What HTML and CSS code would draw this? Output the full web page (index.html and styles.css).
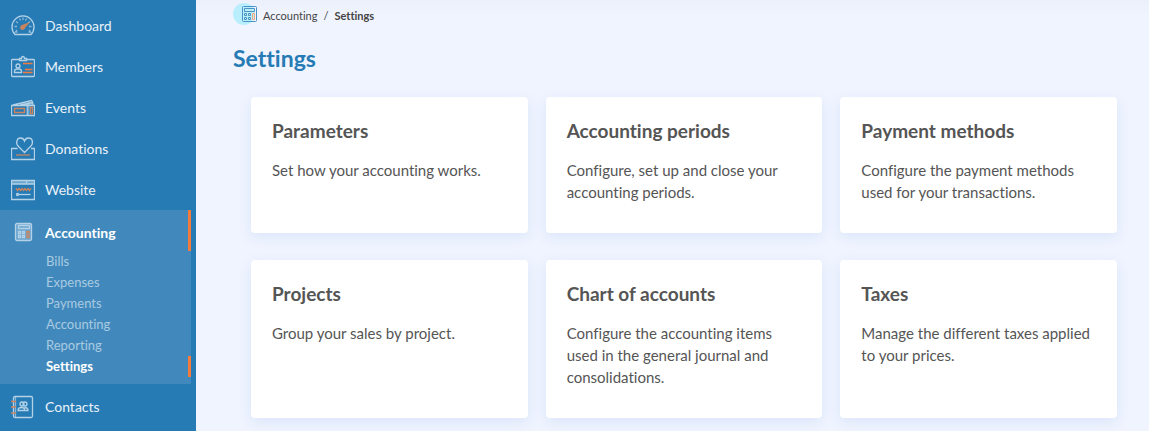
FILE: index.html
```html
<!DOCTYPE html>
<html lang="en">
<head>
    <meta charset="UTF-8">
    <meta name="viewport" content="width=device-width, initial-scale=1.0">
    <title>Accounting - Settings</title>
    <link rel="stylesheet" href="styles.css">
</head>
<body>
    <nav class="sidebar">
        <ul class="menu">
            <li>
                <a class="menu-link" href="#">
                    <svg class="icon" viewBox="0 0 24 24">
                        <path d="M4 20.500A11 11 0 1 1 20 20.500Z"/>
                        <path class="thin" d="M6.500 18H4.500L6 16M3.500 12.500H6M5 7.500L7 9M8.500 4.500L9.500 6.500M12 3.500V6M15.500 4.500L14.500 6.500M19 7.500L17 9M20.500 12.500H18M17.500 18H19.500L18 16"/>
                        <path class="accent-fill" d="M19 8L14 14A2.500 2.500 0 1 1 11 11Z"/>
                    </svg>
                    Dashboard
                </a>
            </li>
            <li>
                <a class="menu-link" href="#">
                    <svg class="icon" viewBox="0 0 24 24">
                        <path d="M8 4.500H1.500Q.500 4.500 .500 5.500V20.500Q.500 21.500 1.500 21.500H22.500Q23.500 21.500 23.500 20.500V5.500Q23.500 4.500 22.500 4.500H16"/>
                        <path d="M8.500 5.500V3.500H10.500Q10.500 1.500 12 1.500T13.500 3.500H15.500V5.500Z"/>
                        <circle cx="7" cy="11" r="2"/>
                        <path d="M3.500 17.500V16Q3.500 14 7 14T10.500 16V17.500Z"/>
                        <path class="accent bright" d="M12 8.500H21.500M14 14.500H21.500M12 17.500H21.500"/>
                    </svg>
                    Members
                </a>
            </li>
            <li>
                <a class="menu-link" href="#">
                    <svg class="icon" viewBox="0 0 24 24">
                        <path class="tint" d="M15.500 9H18.500V19H15.500ZM9 9L21 6V9Z"/>
                        <path d="M.500 9.500H23.500V19.500H.500ZM2 9L20.500 4.500L21.500 6L22 9M9 9L22 6.500"/>
                        <path class="accent" d="M3.500 12.500H13.500V16.500H3.500ZM19.500 11.500H21.500V17.500H19.500Z"/>
                        <path class="thin" d="M16.500 8V19M17.500 5.500V9"/>
                    </svg>
                    Events
                </a>
            </li>
            <li>
                <a class="menu-link" href="#">
                    <svg class="icon" viewBox="0 0 24 24">
                        <path d="M6.500 11.500H.500V22.500H23.500V11.500H20"/>
                        <path d="M13.500 15.500L7.500 9.500C4 6 6 1 9.500 1Q12.500 1 13.500 4Q14.500 1 17.500 1C21.500 1 23 6 19.500 9.500Z"/>
                        <path class="accent" d="M5 18H19"/>
                    </svg>
                    Donations
                </a>
            </li>
            <li>
                <a class="menu-link" href="#">
                    <svg class="icon" viewBox="0 0 24 24">
                        <path class="tint" d="M1 3H23V6H1Z"/>
                        <path d="M.500 2.500H23.500V21.500H.500ZM.500 6H23.500M15.500 3V5"/>
                        <path class="accent" d="M5 10L6.500 12.500L8 10.500L9.500 12.500L11 10.500L12.500 12.500L14 10.500L15.500 12.500L17 10.500L18.500 12.500L20 10"/>
                        <path d="M8 16.500H19.500"/>
                        <circle cx="6.500" cy="16.500" r="1"/>
                    </svg>
                    Website
                </a>
            </li>
            <li class="menu-group">
                <a class="menu-link active" href="#">
                    <svg class="icon" viewBox="0 0 24 24">
                        <rect class="tint" x="4.500" y="3.500" width="16" height="17" rx="1.500"/>
                        <rect x="4.500" y="3.500" width="16" height="17" rx="1.500"/>
                        <path d="M7.500 5.500H18.500V8.500H7.500Z"/>
                        <path d="M7.500 11.500H9.500V13.500H7.500ZM11.500 11.500H13.500V13.500H11.500ZM7.500 15.500H9.500V17.500H7.500ZM11.500 15.500H13.500V17.500H11.500Z"/>
                        <path class="accent" d="M16 11.500H18V17.500H16Z"/>
                    </svg>
                    Accounting
                </a>
                <ul class="submenu">
                    <li><a class="submenu-link" href="#">Bills</a></li>
                    <li><a class="submenu-link" href="#">Expenses</a></li>
                    <li><a class="submenu-link" href="#">Payments</a></li>
                    <li><a class="submenu-link" href="#">Accounting</a></li>
                    <li><a class="submenu-link" href="#">Reporting</a></li>
                    <li><a class="submenu-link active" href="#">Settings</a></li>
                </ul>
            </li>
            <li>
                <a class="menu-link" href="#">
                    <svg class="icon" viewBox="0 0 24 24">
                        <rect x="2.500" y="1.500" width="19" height="21" rx="1.500"/>
                        <path class="thin" d="M4.500 2V22"/>
                        <path class="accent" d="M0 6.500H5M0 12H5M0 18H5"/>
                        <circle cx="11" cy="9" r="2"/>
                        <circle cx="14" cy="9" r="2"/>
                        <path d="M7 15.500Q7 12.500 10.500 12.500T13.500 15.500ZM13.500 12.500Q17 12.500 17 15.500H14"/>
                    </svg>
                    Contacts
                </a>
            </li>
        </ul>
    </nav>

    <main class="content">
        <nav class="breadcrumb">
            <svg class="breadcrumb-icon" viewBox="0 0 26 24">
                <circle class="halo" cx="11" cy="11" r="11"/>
                <rect x="9.500" y="3.500" width="14" height="15" rx="1"/>
                <path d="M11.500 5.500H21.500V8.500H11.500ZM11.500 10.500H13.500V12.500H11.500ZM15.500 10.500H17.500V12.500H15.500ZM11.500 14.500H13.500V16.500H11.500ZM15.500 14.500H17.500V16.500H15.500Z"/>
                <path class="accent" d="M19.500 10.500H21.500V16.500H19.500Z"/>
            </svg>
            <a href="#">Accounting</a>
            <span>/</span>
            <strong>Settings</strong>
        </nav>

        <h1>Settings</h1>

        <div class="cards">
            <a class="card" href="#">
                <h2>Parameters</h2>
                <p>Set how your accounting works.</p>
            </a>
            <a class="card" href="#">
                <h2>Accounting periods</h2>
                <p>Configure, set up and close your accounting periods.</p>
            </a>
            <a class="card" href="#">
                <h2>Payment methods</h2>
                <p>Configure the payment methods used for your transactions.</p>
            </a>
            <a class="card" href="#">
                <h2>Projects</h2>
                <p>Group your sales by project.</p>
            </a>
            <a class="card" href="#">
                <h2>Chart of accounts</h2>
                <p>Configure the accounting items used in the general journal and consolidations.</p>
            </a>
            <a class="card" href="#">
                <h2>Taxes</h2>
                <p>Manage the different taxes applied to your prices.</p>
            </a>
        </div>
    </main>
</body>
</html>
```
FILE: styles.css
```css
* {
    box-sizing: border-box;
}

body {
    margin: 0;
    display: flex;
    min-height: 100vh;
    font-family: Muli, Lato, sans-serif;
    font-size: 15px;
    font-variant-ligatures: none;
    color: #555;
    background: #f0f4fe;
}

a {
    color: inherit;
    text-decoration: none;
}

ul {
    list-style: none;
    margin: 0;
    padding: 0;
}

/* Sidebar */
.sidebar {
    flex: 0 0 196px;
    padding: 5px 5px 0 0;
    background: #277bb5;
    color: #e8f2f9;
}

.menu-link {
    display: flex;
    align-items: center;
    gap: 10px;
    height: 41px;
    padding-left: 11px;
    font-size: 14px;
}

.menu-link.active,
.submenu-link.active {
    color: #fff;
    font-weight: 700;
    border-right: 3px solid #f47b3c;
}

.menu-link.active {
    padding-top: 3px;
}

.menu-group {
    margin-bottom: 2px;
    padding-bottom: 7px;
    background: #4189bc;
}

.submenu-link {
    display: block;
    padding-left: 46px;
    font-size: 13px;
    line-height: 21px;
    color: #a9cae1;
}

.icon {
    flex: none;
    width: 24px;
    height: 24px;
    fill: none;
    stroke: #b4d2e7;
    stroke-width: 1.3;
}

.thin {
    opacity: 0.7;
}

.tint {
    fill: #6aa5cf;
    stroke: none;
}

.accent {
    stroke: #cc855f;
}

.accent.bright {
    stroke: #ee7c40;
}

.accent-fill {
    fill: #c7835d;
    stroke: none;
}

/* Content */
.content {
    flex: 1;
    min-width: 0;
    padding: 3px 32px 14px 37px;
    background: linear-gradient(#ecf0fa, #f0f4fe 16px);
}

.breadcrumb {
    display: flex;
    align-items: center;
    gap: 6px;
    height: 24px;
    font-size: 11px;
    color: #444;
}

.breadcrumb-icon {
    width: 26px;
    height: 24px;
    margin-right: -2px;
    fill: none;
    stroke: #4b93c6;
}

.breadcrumb-icon .halo {
    fill: #b9effd;
    stroke: none;
}

.breadcrumb-icon .accent {
    stroke: #f2a77f;
}

h1 {
    margin: 16px 0 24px;
    font-size: 23px;
    line-height: 30px;
    color: #277bb5;
}

.cards {
    display: grid;
    grid-template-columns: repeat(3, 1fr);
    gap: 27px 18px;
    padding-left: 18px;
}

.card {
    padding: 22px 21px 30px;
    background: #fff;
    border-radius: 4px;
    box-shadow: 0 4px 14px #d9e5fa;
}

.card h2 {
    margin: 0 0 16px;
    font-size: 19px;
    line-height: 24px;
}

.card p {
    margin: 0;
    line-height: 22px;
}
```
